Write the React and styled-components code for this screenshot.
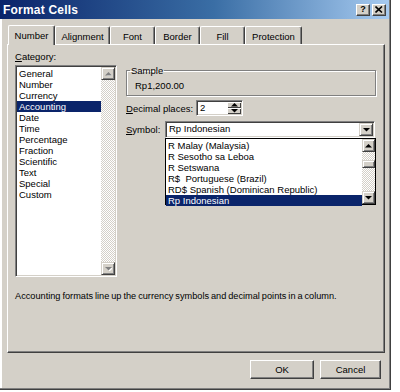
import React from 'react';
import styled, { createGlobalStyle } from 'styled-components';

const FACE = '#d4d0c8';
const SHADOW = '#808080';
const DARK = '#404040';
const NAVY = '#0a246a';

const GlobalStyle = createGlobalStyle`
  html, body {
    margin: 0;
    padding: 0;
    background: #fff;
  }
  body {
    font-family: "Liberation Sans", Arial, sans-serif;
    font-size: 9.5px;
    color: #000;
  }
`;

const Dialog = styled.div`
  width: 391px;
  height: 390px;
  background: ${FACE};
  box-shadow: inset -1px -1px ${DARK}, inset -2px -2px ${SHADOW},
    inset 2px 0 #fff;
  display: flex;
  flex-direction: column;
  box-sizing: border-box;
`;

const TitleBar = styled.div`
  height: 19px;
  margin-right: 2px;
  background: linear-gradient(to right, ${NAVY} 0%, #3a6ea5 55%, #a6caf0 100%);
  display: flex;
  align-items: center;
  justify-content: space-between;
  padding: 0 3px 0 3px;
`;

const Title = styled.span`
  color: #fff;
  font-weight: bold;
  font-size: 12px;
  letter-spacing: 0.2px;
`;

const CaptionButtons = styled.div`
  display: flex;
  gap: 2px;
`;

const CaptionButton = styled.div`
  width: 14px;
  height: 12px;
  box-sizing: border-box;
  background: ${FACE};
  border: 1px solid;
  border-color: #fff ${DARK} ${DARK} #fff;
  box-shadow: inset -1px -1px ${SHADOW};
  display: flex;
  align-items: center;
  justify-content: center;
  font-weight: bold;
  font-size: 9px;
  line-height: 1;
`;

const Body = styled.div`
  flex: 1;
  display: flex;
  flex-direction: column;
  padding: 5px 6px 0 7px;
`;

const Tabs = styled.div`
  display: flex;
  align-items: flex-end;
  height: 20px;
  padding-left: 1px;
`;

const Tab = styled.div`
  width: ${(p) => p.$w}px;
  height: ${(p) => (p.$active ? 20 : 18)}px;
  box-sizing: border-box;
  border-top: 1px solid #fff;
  border-left: 1px solid #fff;
  border-right: 1px solid ${DARK};
  box-shadow: inset -1px 0 ${SHADOW};
  border-radius: 2px 2px 0 0;
  display: flex;
  align-items: center;
  justify-content: center;
  padding-top: ${(p) => (p.$active ? 0 : 1)}px;
  position: relative;
  z-index: ${(p) => (p.$active ? 1 : 0)};
  margin-bottom: ${(p) => (p.$active ? -1 : 0)}px;
  background: ${FACE};
`;

const Panel = styled.div`
  width: 378px;
  height: 309px;
  box-sizing: border-box;
  border: 1px solid;
  border-color: #fff ${DARK} ${DARK} #fff;
  box-shadow: inset -1px -1px ${SHADOW};
  padding: 5px 8px 0 7px;
  display: flex;
  flex-direction: column;
`;

const Columns = styled.div`
  display: flex;
  gap: 9px;
`;

const LeftCol = styled.div`
  width: 102px;
  display: flex;
  flex-direction: column;
`;

const RightCol = styled.div`
  width: 250px;
  display: flex;
  flex-direction: column;
  padding-top: 15px;
`;

const Label = styled.div`
  height: 13px;
  line-height: 13px;
  width: ${(p) => (p.$w ? `${p.$w}px` : 'auto')};
  flex-shrink: 0;
  u {
    text-decoration: underline;
  }
`;

const Sunken = styled.div`
  box-sizing: border-box;
  background: #fff;
  border: 1px solid;
  border-color: ${SHADOW} #fff #fff ${SHADOW};
  box-shadow: inset 1px 1px ${DARK}, inset -1px -1px ${FACE};
  padding: 1px;
`;

const ListBox = styled(Sunken)`
  margin-top: 2px;
  height: 212px;
  display: flex;
`;

const Items = styled.div`
  flex: 1;
  padding-top: 1px;
`;

const Item = styled.div`
  height: 11px;
  line-height: 11px;
  padding-left: 2px;
  white-space: nowrap;
  background: ${(p) => (p.$selected ? NAVY : 'transparent')};
  color: ${(p) => (p.$selected ? '#fff' : '#000')};
`;

const ScrollBar = styled.div`
  width: ${(p) => p.$w}px;
  display: flex;
  flex-direction: column;
  background: repeating-conic-gradient(#fff 0 25%, ${FACE} 0 50%) 0 0 / 2px 2px;
`;

const ScrollButton = styled.div`
  height: ${(p) => p.$h || 13}px;
  width: ${(p) => (p.$w ? `${p.$w}px` : 'auto')};
  box-sizing: border-box;
  background: ${FACE};
  border: 1px solid;
  border-color: ${FACE} ${DARK} ${DARK} ${FACE};
  box-shadow: inset 1px 1px #fff, inset -1px -1px ${SHADOW};
  display: flex;
  align-items: center;
  justify-content: center;
  flex-shrink: 0;
`;

const Track = styled.div`
  flex: 1;
  display: flex;
  flex-direction: column;
`;

const Spacer = styled.div`
  height: ${(p) => p.$h}px;
  flex-shrink: 0;
`;

const Group = styled.fieldset`
  margin: 0;
  height: 31px;
  box-sizing: border-box;
  padding: 3px 8px 0 8px;
  border: 1px solid ${SHADOW};
  box-shadow: inset 1px 1px #fff, 1px 1px #fff;
`;

const Legend = styled.legend`
  padding: 0 1px;
  margin-left: -5px;
  font-size: 9.5px;
  color: #000;
`;

const SampleValue = styled.div`
  line-height: 13px;
`;

const FieldRow = styled.div`
  display: flex;
  align-items: center;
  margin-top: ${(p) => p.$mt}px;
  position: relative;
`;

const Spinner = styled(Sunken)`
  width: 47px;
  height: 16px;
  display: flex;
  padding: 1px;
`;

const FieldText = styled.div`
  flex: 1;
  line-height: 12px;
  padding-left: 2px;
`;

const SpinButtons = styled.div`
  width: 14px;
  display: flex;
  flex-direction: column;
`;

const SpinButton = styled(ScrollButton)`
  height: 6px;
  border-width: 0;
  box-shadow: inset 1px 1px #fff, inset -1px -1px ${DARK};
`;

const Combo = styled(Sunken)`
  width: 210px;
  height: 17px;
  display: flex;
  padding: 1px;
`;

const DropList = styled.div`
  position: absolute;
  left: 39px;
  top: 100%;
  width: 211px;
  height: 67px;
  box-sizing: border-box;
  background: #fff;
  border: 1px solid #000;
  display: flex;
  z-index: 2;
`;

const Description = styled.div`
  margin-top: 13px;
  line-height: 12px;
  white-space: nowrap;
  font-size: 9.2px;
  word-spacing: -0.6px;
`;

const Buttons = styled.div`
  display: flex;
  justify-content: flex-end;
  gap: 6px;
  padding: 7px 4px 0 0;
`;

const Button = styled.div`
  width: ${(p) => p.$w}px;
  height: 19px;
  box-sizing: border-box;
  background: ${FACE};
  border: 1px solid;
  border-color: #fff ${DARK} ${DARK} #fff;
  box-shadow: inset -1px -1px ${SHADOW};
  display: flex;
  align-items: center;
  justify-content: center;
`;

const Arrow = ({ dir = 'down', disabled }) => (
  <svg width="7" height="4" viewBox="0 0 7 4">
    {disabled && (
      <path
        d={dir === 'up' ? 'M4.5 1 L8 4.5 L1 4.5 Z' : 'M1 1 L8 1 L4.5 4.5 Z'}
        fill="#fff"
      />
    )}
    <path
      d={dir === 'up' ? 'M3.5 0 L7 3.5 L0 3.5 Z' : 'M0 0 L7 0 L3.5 3.5 Z'}
      fill={disabled ? SHADOW : '#000'}
    />
  </svg>
);

const CloseGlyph = () => (
  <svg width="8" height="7" viewBox="0 0 8 7">
    <path d="M0.5 0.5 L7 6.5 M7 0.5 L0.5 6.5" stroke="#000" strokeWidth="1.6" />
  </svg>
);

const tabs = [
  { name: 'Number', w: 47, active: true },
  { name: 'Alignment', w: 55 },
  { name: 'Font', w: 45 },
  { name: 'Border', w: 45 },
  { name: 'Fill', w: 45 },
  { name: 'Protection', w: 57 },
];

const categories = [
  'General',
  'Number',
  'Currency',
  'Accounting',
  'Date',
  'Time',
  'Percentage',
  'Fraction',
  'Scientific',
  'Text',
  'Special',
  'Custom',
];

const symbols = [
  'R Malay (Malaysia)',
  'R Sesotho sa Leboa',
  'R Setswana',
  'R$\u00a0 Portuguese (Brazil)',
  'RD$ Spanish (Dominican Republic)',
  'Rp Indonesian',
];

export default function App() {
  return (
    <>
      <GlobalStyle />
      <Dialog>
        <TitleBar>
          <Title>Format Cells</Title>
          <CaptionButtons>
            <CaptionButton>?</CaptionButton>
            <CaptionButton>
              <CloseGlyph />
            </CaptionButton>
          </CaptionButtons>
        </TitleBar>
        <Body>
          <Tabs>
            {tabs.map((t) => (
              <Tab key={t.name} $w={t.w} $active={t.active}>
                {t.name}
              </Tab>
            ))}
          </Tabs>
          <Panel>
            <Columns>
              <LeftCol>
                <Label>
                  <u>C</u>ategory:
                </Label>
                <ListBox>
                  <Items>
                    {categories.map((c) => (
                      <Item key={c} $selected={c === 'Accounting'}>
                        {c}
                      </Item>
                    ))}
                  </Items>
                  <ScrollBar $w={14}>
                    <ScrollButton>
                      <Arrow dir="up" disabled />
                    </ScrollButton>
                    <Track />
                    <ScrollButton>
                      <Arrow dir="down" disabled />
                    </ScrollButton>
                  </ScrollBar>
                </ListBox>
              </LeftCol>
              <RightCol>
                <Group>
                  <Legend>Sample</Legend>
                  <SampleValue>Rp1,200.00</SampleValue>
                </Group>
                <FieldRow $mt={4}>
                  <Label $w={70}>
                    <u>D</u>ecimal places:
                  </Label>
                  <Spinner>
                    <FieldText>2</FieldText>
                    <SpinButtons>
                      <SpinButton>
                        <Arrow dir="up" />
                      </SpinButton>
                      <SpinButton>
                        <Arrow dir="down" />
                      </SpinButton>
                    </SpinButtons>
                  </Spinner>
                </FieldRow>
                <FieldRow $mt={5}>
                  <Label $w={39}>
                    <u>S</u>ymbol:
                  </Label>
                  <Combo>
                    <FieldText>Rp Indonesian</FieldText>
                    <ScrollButton $h={13} $w={14}>
                      <Arrow dir="down" />
                    </ScrollButton>
                  </Combo>
                  <DropList>
                    <Items>
                      {symbols.map((s) => (
                        <Item key={s} $selected={s === 'Rp Indonesian'}>
                          {s}
                        </Item>
                      ))}
                    </Items>
                    <ScrollBar $w={13}>
                      <ScrollButton>
                        <Arrow dir="up" />
                      </ScrollButton>
                      <Track>
                        <Spacer $h={8} />
                        <ScrollButton $h={8} />
                      </Track>
                      <ScrollButton>
                        <Arrow dir="down" />
                      </ScrollButton>
                    </ScrollBar>
                  </DropList>
                </FieldRow>
              </RightCol>
            </Columns>
            <Description>
              Accounting formats line up the currency symbols and decimal points in a column.
            </Description>
          </Panel>
          <Buttons>
            <Button $w={64}>OK</Button>
            <Button $w={61}>Cancel</Button>
          </Buttons>
        </Body>
      </Dialog>
    </>
  );
}
